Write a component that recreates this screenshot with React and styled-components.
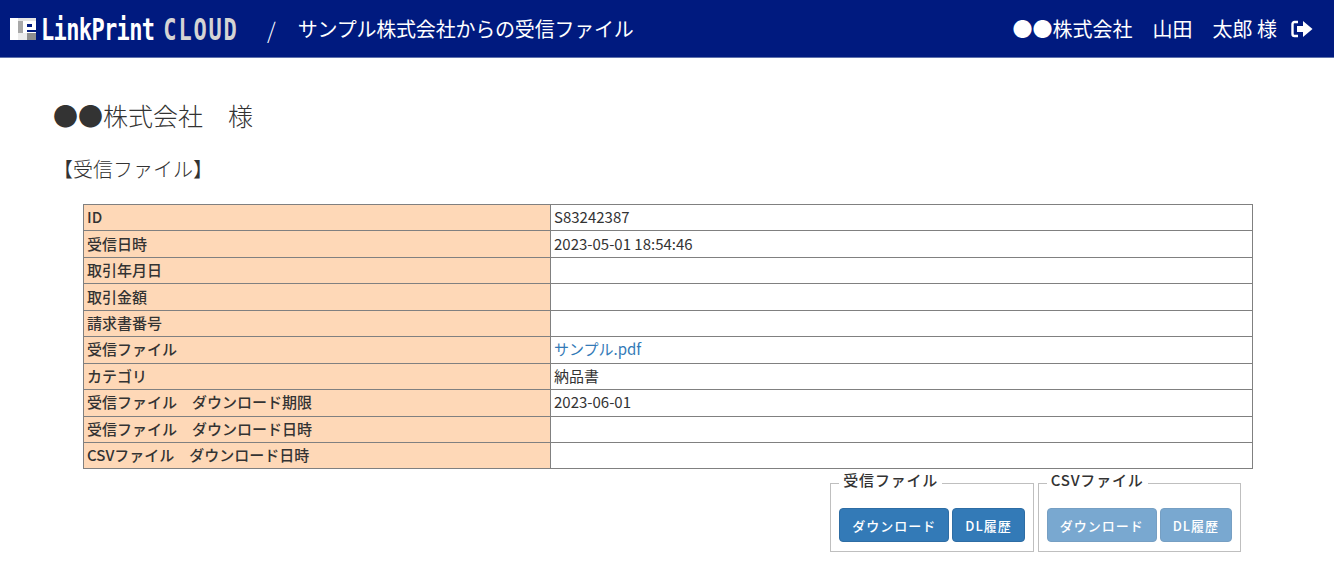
import React from 'react';
import styled, { createGlobalStyle } from 'styled-components';

const GlobalStyle = createGlobalStyle`
  html, body {
    margin: 0;
    padding: 0;
    background: #fff;
    color: #333;
    font-family: "Noto Sans CJK JP", "Liberation Sans", sans-serif;
    font-size: 15px;
  }
  * { box-sizing: border-box; }
`

const Header = styled.header`
  height: 58px;
  background: #001a7f;
  border-bottom: 1px solid #5f72ac;
  color: #fff;
  display: flex;
  align-items: center;
  padding: 0 21px 0 10px;
`
const Logo = styled.div`
  display: flex;
  align-items: center;
  width: 229px;
  flex: none;
`
const LogoWord = styled.span`
  font-family: "DejaVu Sans Mono", monospace;
  font-weight: 700;
  font-size: 22px;
  line-height: 22px;
  transform: translateY(1px) scaleY(1.36);
  letter-spacing: ${props => props.$muted ? '1.8px' : '-0.65px'};
  margin-left: ${props => props.$muted ? '9px' : '5px'};
  color: ${props => props.$muted ? '#d4d4d4' : '#fff'};
  white-space: nowrap;
`
const Slash = styled.span`
  font-size: 22px;
  font-weight: 300;
  margin-left: 28px;
`
const Title = styled.h1`
  margin: 0 0 0 22px;
  font-size: 20px;
  font-weight: 400;
  letter-spacing: -0.2px;
`
const UserArea = styled.div`
  margin-left: auto;
  display: flex;
  align-items: center;
  font-size: 20px;
  gap: 14px;
`
const UserName = styled.span`
  white-space: pre;
`

const Main = styled.main`
  padding: 40px 81px 0 53px;
`
const Company = styled.h2`
  margin: 0;
  font-size: 25px;
  line-height: 34px;
  font-weight: 300;
  color: #333;
`
const Section = styled.h3`
  margin: 24px 0 0 0;
  font-size: 20px;
  line-height: 26px;
  font-weight: 300;
`
const InfoTable = styled.table`
  margin: 22px 0 0 30px;
  width: 1170px;
  border-collapse: collapse;
  table-layout: fixed;
`
const Label = styled.th`
  width: 467px;
  height: 26.45px;
  padding: 0 3px 1px;
  background: #fed8b7;
  border: 1px solid #808080;
  text-align: left;
  font-weight: 500;
  font-size: 15px;
  line-height: 20px;
  white-space: pre;
`
const Value = styled.td`
  height: 26.45px;
  padding: 0 3px 1px;
  border: 1px solid #808080;
  font-size: 15px;
  line-height: 20px;
`
const FileLink = styled.a`
  color: #337ab7;
  text-decoration: none;
`
const Actions = styled.div`
  display: flex;
  justify-content: flex-end;
  gap: 4px;
  padding-right: 12px;
`
const Group = styled.fieldset`
  margin: 0;
  padding: 11px 8px 9px 8px;
  border: 1px solid #bfbfbf;
  display: flex;
  gap: 3px;
`
const Legend = styled.legend`
  padding: 0 4px 6px;
  font-size: 15px;
  line-height: 22px;
  font-weight: 500;
  letter-spacing: 0.8px;
`
const Button = styled.button`
  height: 34px;
  padding: 0 12px;
  border: 1px solid #2e6da4;
  border-radius: 4px;
  background: #337ab7;
  color: #fff;
  font-family: inherit;
  font-size: 13px;
  font-weight: 500;
  letter-spacing: 1px;
  opacity: ${props => props.disabled ? 0.65 : 1};
  white-space: nowrap;
`

const rows = [
  ['ID', 'S83242387'],
  ['受信日時', '2023-05-01 18:54:46'],
  ['取引年月日', ''],
  ['取引金額', ''],
  ['請求書番号', ''],
  ['受信ファイル', <FileLink href="#">サンプル.pdf</FileLink>],
  ['カテゴリ', '納品書'],
  ['受信ファイル　ダウンロード期限', '2023-06-01'],
  ['受信ファイル　ダウンロード日時', ''],
  ['CSVファイル　ダウンロード日時', ''],
]

const LogoMark = () => (
  <svg width="26" height="22" viewBox="0 0 26 22">
    <rect x="0" y="0" width="8" height="22" fill="#fff" />
    <rect x="8" y="0" width="18" height="3" fill="#e4e4e4" />
    <rect x="8" y="3" width="9" height="12" fill="#a8a8a8" />
    <rect x="8" y="15" width="9" height="7" fill="#ececec" />
    <rect x="17" y="15" width="9" height="7" fill="#8f8f8f" />
    <rect x="13" y="3" width="13" height="12" fill="#fff" />
    <rect x="17" y="6" width="5" height="3" fill="#001a7f" />
    <rect x="17" y="12" width="9" height="2" fill="#001a7f" />
  </svg>
)

const LogoutIcon = () => (
  <svg width="22" height="18" viewBox="0 0 22 18">
    <path d="M7 2H3.500A2 2 0 0 0 1.500 4v10a2 2 0 0 0 2 2H7" fill="none" stroke="#fff" strokeWidth="2.400" />
    <path d="M6 6h6V1L21.500 9 12 17v-5H6z" fill="#fff" />
  </svg>
)

function App() {
  return (
    <>
      <GlobalStyle />
      <Header>
        <Logo>
          <LogoMark />
          <LogoWord>LinkPrint</LogoWord>
          <LogoWord $muted>CLOUD</LogoWord>
        </Logo>
        <Slash>/</Slash>
        <Title>サンプル株式会社からの受信ファイル</Title>
        <UserArea>
          <UserName>●●株式会社　山田　太郎 様</UserName>
          <LogoutIcon />
        </UserArea>
      </Header>
      <Main>
        <Company>●●株式会社　様</Company>
        <Section>【受信ファイル】</Section>
        <InfoTable>
          <tbody>
            {rows.map((row, index) => (
              <tr key={index}>
                <Label>{row[0]}</Label>
                <Value>{row[1]}</Value>
              </tr>
            ))}
          </tbody>
        </InfoTable>
        <Actions>
          <Group>
            <Legend>受信ファイル</Legend>
            <Button>ダウンロード</Button>
            <Button>DL履歴</Button>
          </Group>
          <Group>
            <Legend>CSVファイル</Legend>
            <Button disabled>ダウンロード</Button>
            <Button disabled>DL履歴</Button>
          </Group>
        </Actions>
      </Main>
    </>
  );
}

export default App;
